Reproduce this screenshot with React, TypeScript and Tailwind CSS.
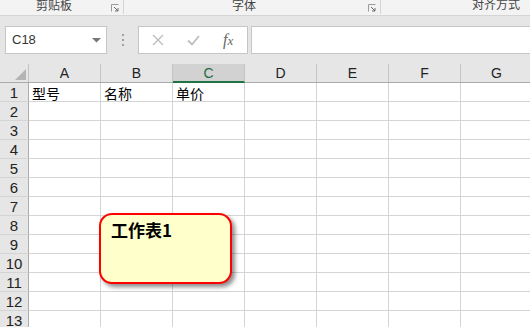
import React from "react";

const cjk = "font-['Microsoft_YaHei','Noto_Sans_CJK_SC',sans-serif]";
const latin = "font-['Liberation_Sans','Noto_Sans_CJK_SC',sans-serif]";

const columns = ["A", "B", "C", "D", "E", "F", "G"];
const rowCount = 14;
const cellData: Record<string, string> = { "1A": "型号", "1B": "名称", "1C": "单价" };

function Launcher() {
  return (
    <svg width="8" height="8" viewBox="0 0 8 8" className="mt-[4px]">
      <path d="M0.5 7.5V0.5H7.5" fill="none" stroke="#9a9a9a" strokeWidth="1" />
      <path d="M3 3L7 7M4 7H7V4" fill="none" stroke="#6a6a6a" strokeWidth="1" />
    </svg>
  );
}

function Ribbon() {
  return (
    <div className={`flex h-[16px] border-b border-[#d5d5d5] bg-[#f3f3f3] text-[12px] text-[#444] ${cjk}`}>
      <div className="flex w-[124px] border-r border-[#d5d5d5] h-[14px]">
        <div className="flex-1 flex justify-center items-end pb-[3px] pl-[2px] leading-none">剪贴板</div>
        <div className="w-[17px] flex justify-start pl-[5px]">
          <Launcher />
        </div>
      </div>
      <div className="flex w-[257px] border-r border-[#d5d5d5] h-[14px]">
        <div className="flex-1 flex justify-center items-end pb-[3px] leading-none">字体</div>
        <div className="w-[16px] flex justify-start pl-[4px]">
          <Launcher />
        </div>
      </div>
      <div className="flex-1 flex items-end pb-[5px] pl-[91px] leading-none">对齐方式</div>
    </div>
  );
}

function FormulaBand() {
  return (
    <div className="flex items-center h-[48px] bg-[#e6e6e6] pl-[5px]">
      <div className={`flex items-center w-[102px] h-[28px] bg-white border border-[#c6c6c6] pl-[6px] pr-[5px] text-[13px] text-[#333] ${latin}`}>
        <span className="flex-1">C18</span>
        <svg width="9" height="5" viewBox="0 0 9 5">
          <path d="M0 0H9L4.5 4.5Z" fill="#777" />
        </svg>
      </div>
      <div className="w-[31px] flex flex-col items-center gap-[3px]">
        <div className="w-[2px] h-[2px] bg-[#a0a0a0]" />
        <div className="w-[2px] h-[2px] bg-[#a0a0a0]" />
        <div className="w-[2px] h-[2px] bg-[#a0a0a0]" />
      </div>
      <div className="flex items-center w-[110px] h-[28px] bg-white border border-[#c6c6c6]">
        <svg width="12" height="12" viewBox="0 0 12 12" className="ml-[13px]">
          <path d="M1 1L11 11M11 1L1 11" stroke="#bdbdbd" strokeWidth="1.4" />
        </svg>
        <svg width="13" height="11" viewBox="0 0 13 11" className="ml-[23px]">
          <path d="M1 5.5L5 9.5L12 1" fill="none" stroke="#bdbdbd" strokeWidth="1.8" />
        </svg>
        <span className="ml-[23px] text-[16px] italic text-[#666] font-['Liberation_Serif',serif] leading-none">
          f<span className="text-[13px]">x</span>
        </span>
      </div>
      <div className="ml-[3px] flex-1 h-[28px] bg-white border border-[#c6c6c6] border-r-0" />
    </div>
  );
}

function Grid() {
  return (
    <div className="flex flex-col">
      <div className={`flex h-[19px] bg-[#e6e6e6] border-b border-[#ababab] text-[14px] text-[#222] ${latin}`}>
        <div className="w-[29px] shrink-0 border-r border-[#c4c4c4] flex items-end justify-end pr-[2px] pb-[2px]">
          <svg width="11" height="11" viewBox="0 0 11 11">
            <path d="M11 0V11H0Z" fill="#b4b4b4" />
          </svg>
        </div>
        {columns.map((c) =>
          c === "C" ? (
            <div
              key={c}
              className="w-[72px] shrink-0 border-r border-[#c4c4c4] bg-[#d2d2d2] border-b-2 border-b-[#217346] -mb-[1px] flex items-end justify-center leading-none pb-[1px] text-[#1e6b41]"
            >
              {c}
            </div>
          ) : (
            <div key={c} className="w-[72px] shrink-0 border-r border-[#c4c4c4] flex items-end justify-center leading-none pb-[2px]">
              {c}
            </div>
          )
        )}
      </div>
      {Array.from({ length: rowCount }, (_, i) => i + 1).map((r) => (
        <div key={r} className="flex h-[19px]">
          <div
            className={`w-[29px] shrink-0 bg-[#e6e6e6] border-r border-[#ababab] border-b border-b-[#d4d4d4] flex items-center justify-center text-[15px] text-[#222] leading-none pt-[1px] ${latin}`}
          >
            {r}
          </div>
          {columns.map((c) => (
            <div
              key={c}
              className={`w-[72px] shrink-0 border-r border-b border-[#d4d4d4] bg-white flex items-end pl-[3px] pb-[1px] text-[14px] leading-none text-black ${cjk}`}
            >
              {cellData[`${r}${c}`] ?? ""}
            </div>
          ))}
        </div>
      ))}
    </div>
  );
}

export default function App() {
  return (
    <div className="relative w-[530px] h-[327px] overflow-hidden bg-white">
      <Ribbon />
      <FormulaBand />
      <Grid />
      {/* floating text box */}
      <div
        className={`absolute left-[99px] top-[213px] w-[133px] h-[71px] rounded-[13px] border-2 border-[#ff0000] bg-[#ffffcc] shadow-[3px_3px_4px_rgba(0,0,0,0.45)] pl-[10px] pt-[6px] text-[17px] font-bold text-black leading-none ${cjk}`}
      >
        工作表1
      </div>
    </div>
  );
}
